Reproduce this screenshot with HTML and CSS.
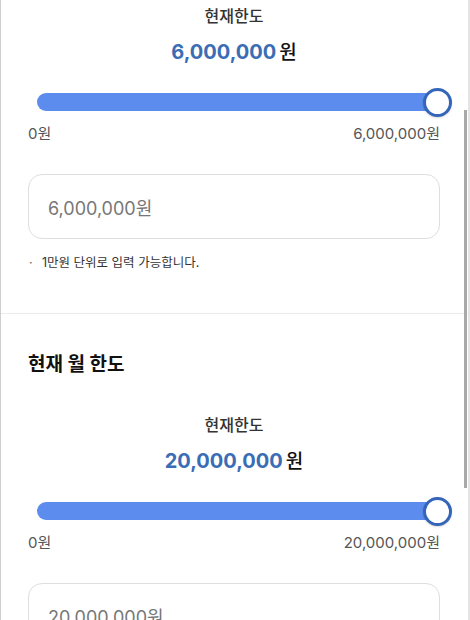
FILE: index.html
```html
<!DOCTYPE html>
<html lang="ko">
<head>
    <meta charset="UTF-8">
    <title>한도 설정</title>
    <link rel="stylesheet" href="styles.css">
</head>
<body>
<div class="page">
    <div class="section first">
        <div class="limit-label">현재한도</div>
        <div class="amount"><span class="amount-num">6,000,000</span><span class="amount-unit">원</span></div>
        <div class="slider">
            <div class="track"></div>
            <div class="thumb"></div>
        </div>
        <div class="range">
            <span>0원</span>
            <span>6,000,000원</span>
        </div>
        <div class="input-box">6,000,000원</div>
        <p class="note"><span class="dot">·</span>1만원 단위로 입력 가능합니다.</p>
    </div>

    <div class="section">
        <h2 class="section-title">현재 월 한도</h2>
        <div class="limit-label spaced">현재한도</div>
        <div class="amount"><span class="amount-num">20,000,000</span><span class="amount-unit">원</span></div>
        <div class="slider">
            <div class="track"></div>
            <div class="thumb"></div>
        </div>
        <div class="range">
            <span>0원</span>
            <span>20,000,000원</span>
        </div>
        <div class="input-box">20,000,000원</div>
        <p class="note"><span class="dot">·</span>1만원 단위로 입력 가능합니다.</p>
    </div>
</div>
<div class="scrollbar"></div>
</body>
</html>
```

FILE: styles.css
```css
* {
    box-sizing: border-box;
}

body {
    margin: 0;
    padding: 0;
    font-family: Inter, 'Noto Sans CJK KR', sans-serif;
    background-color: #fff;
    color: #222;
    overflow: hidden;
}

.page {
    width: 470px;
    min-height: 620px;
    border-left: 1px solid #cfcfcf;
    border-right: 2px solid #e4e4e4;
}

.section {
    padding: 38px 28px 41px 27px;
    border-top: 1px solid #ececec;
}

.section.first {
    padding-top: 5px;
    border-top: none;
}

.section-title {
    margin: 0;
    font-size: 19px;
    line-height: 26px;
    font-weight: 700;
    color: #111;
}

.limit-label {
    text-align: center;
    font-size: 16px;
    line-height: 22px;
    font-weight: 500;
    color: #333;
}

.limit-label.spaced {
    margin-top: 36px;
}

.amount {
    margin-top: 10px;
    text-align: center;
    line-height: 30px;
}

.amount-num {
    font-size: 20px;
    font-weight: 700;
    color: #3a6db4;
}

.amount-unit {
    margin-left: 3px;
    font-size: 19px;
    font-weight: 500;
    color: #111;
}

.slider {
    position: relative;
    margin-top: 20px;
    height: 28px;
    display: flex;
    align-items: center;
}

.track {
    margin-left: 9px;
    width: 404px;
    height: 18px;
    border-radius: 9px;
    background-color: #5b8cee;
}

.thumb {
    position: absolute;
    left: 395px;
    top: 0;
    width: 29px;
    height: 29px;
    border-radius: 50%;
    background-color: #fff;
    border: 3px solid #3465b8;
    box-shadow: 0 1px 2px rgba(0, 0, 0, 0.15);
}

.range {
    margin-top: 8px;
    display: flex;
    justify-content: space-between;
    font-size: 15px;
    line-height: 20px;
    color: #555;
}

.input-box {
    margin-top: 30px;
    height: 65px;
    border: 1px solid #dedede;
    border-radius: 14px;
    padding-left: 19px;
    display: flex;
    align-items: center;
    font-size: 18px;
    color: #777;
}

.note {
    margin: 15px 0 0;
    font-size: 12.5px;
    line-height: 18px;
    color: #333;
}

.dot {
    display: inline-block;
    width: 13px;
    margin-left: 1px;
    color: #666;
}

.scrollbar {
    position: fixed;
    left: 464px;
    top: 110px;
    width: 3px;
    height: 378px;
    background-color: #a9a9a9;
}
```
